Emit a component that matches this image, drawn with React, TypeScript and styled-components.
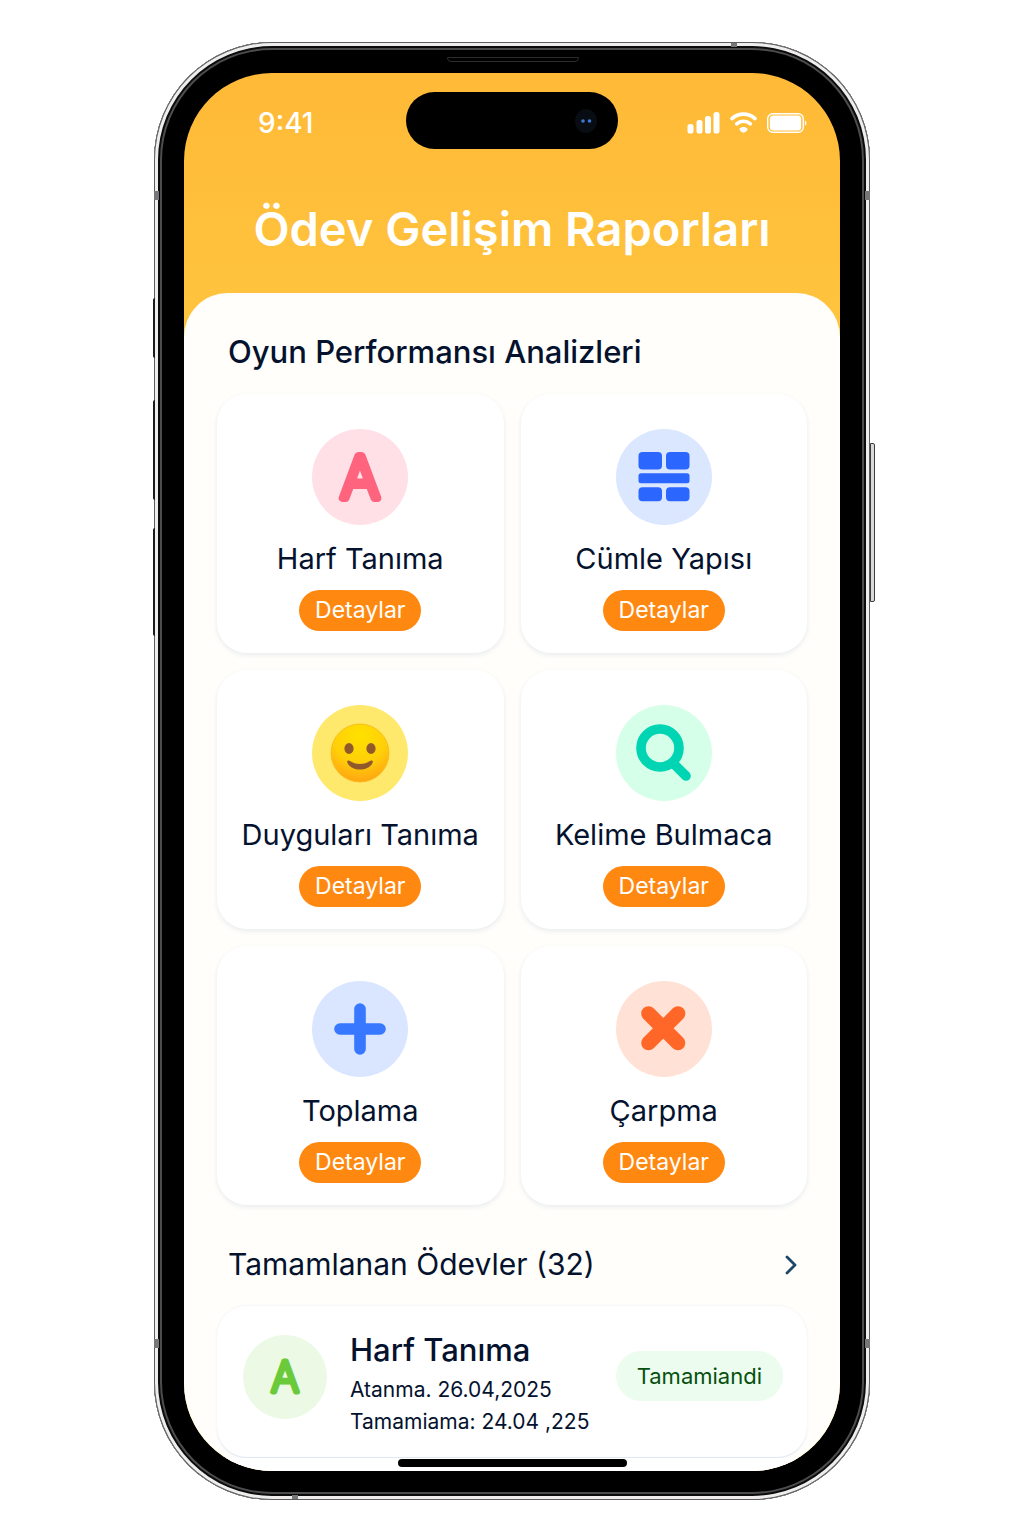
import React from "react";
import styled, { createGlobalStyle, css } from "styled-components";

const ink = "#04122e";

const GlobalStyle = createGlobalStyle`
  *, *::before, *::after { box-sizing: border-box; }
  body {
    margin: 0;
    background: #ffffff;
    color: ${ink};
    font-family: Inter, "Noto Sans", sans-serif;
    -webkit-font-smoothing: antialiased;
  }
  h1, h2, h3, p { margin: 0; }
`;

const Page = styled.div`
  display: flex;
  justify-content: center;
  padding: 42px 16px 36px;
`;

/* ---------- phone body ---------- */

const Device = styled.div`
  position: relative;
  width: 100%;
  max-width: 716px;
  padding: 31px 30px 29px;
  border-radius: 118px;
  background: #000000;
  box-shadow:
    inset 0 0 0 1px #5d5d5f,
    inset 0 0 0 4px #efeeec,
    inset 0 0 0 6px #0b0b0c,
    inset 0 0 0 8px #4d4d50;
`;

const Antenna = styled.span<{ $edge: "left" | "right" | "top" | "bottom"; $at: number }>`
  position: absolute;
  background: #77777a;
  ${(p) =>
    p.$edge === "left" || p.$edge === "right"
      ? css`
          ${p.$edge}: 0;
          top: ${p.$at}px;
          width: 5px;
          height: 9px;
        `
      : css`
          ${p.$edge}: 1px;
          left: ${p.$at}px;
          width: 6px;
          height: 4px;
        `}
`;

const SideKey = styled.span<{ $side: "left" | "right"; $top: number; $length: number }>`
  position: absolute;
  top: ${(p) => p.$top}px;
  height: ${(p) => p.$length}px;
  ${(p) =>
    p.$side === "left"
      ? css`
          left: -1px;
          width: 2px;
          border-radius: 2px 0 0 2px;
          background: #1b1b1d;
        `
      : css`
          right: -5px;
          width: 5px;
          border: 1px solid #3c3c3e;
          border-radius: 0 2px 2px 0;
          background: #d9d9da;
        `}
`;

const Speaker = styled.span`
  position: absolute;
  top: 15px;
  left: 50%;
  width: 132px;
  height: 5px;
  margin-left: -65px;
  border: 1px solid #2c2c2e;
  border-radius: 0 0 4px 4px;
`;

const Screen = styled.div`
  overflow: hidden;
  border-radius: 88px;
  background: linear-gradient(180deg, #ffba37 0, #ffc43e 260px);
`;

/* ---------- header ---------- */

const Header = styled.header`
  color: #ffffff;
  padding: 19px 33px 34px;
`;

const StatusBar = styled.div`
  display: grid;
  grid-template-columns: 1fr auto 1fr;
  align-items: center;
`;

const Clock = styled.time`
  padding: 4px 0 0 41px;
  font-size: 28px;
  line-height: 34px;
  font-weight: 500;
`;

const Island = styled.div`
  display: flex;
  align-items: center;
  justify-content: flex-end;
  width: 212px;
  height: 57px;
  padding-right: 20px;
  border-radius: 29px;
  background: #000000;
`;

const Indicators = styled.div`
  display: flex;
  justify-content: flex-end;
  align-items: center;
  gap: 10px;
  padding-top: 4px;
`;

const Title = styled.h1`
  margin-top: 50px;
  text-align: center;
  font-size: 47px;
  line-height: 60px;
  font-weight: 600;
  white-space: nowrap;
`;

/* ---------- content ---------- */

const Sheet = styled.main`
  border-radius: 44px 44px 0 0;
  background: #fffefb;
`;

const Section = styled.section`
  padding: 39px 33px 0;
`;

const SectionHead = styled.div`
  display: flex;
  align-items: center;
  justify-content: space-between;
  padding: 0 5px 0 11px;
  margin-bottom: 22px;
`;

const SectionTitle = styled.h2<{ $size: number; $weight: number }>`
  font-size: ${(p) => p.$size}px;
  line-height: 40px;
  font-weight: ${(p) => p.$weight};
`;

const MoreButton = styled.button`
  display: flex;
  padding: 6px 4px 4px;
  border: 0;
  background: none;
  cursor: pointer;
`;

const GameGrid = styled.div`
  display: grid;
  grid-template-columns: repeat(2, minmax(0, 1fr));
  gap: 17px;
`;

const cardSurface = css`
  border-radius: 30px;
  background: #ffffff;
  box-shadow: 0 2px 5px rgba(28, 66, 110, 0.1);
`;

const GameCard = styled.article`
  ${cardSurface}
  display: flex;
  flex-direction: column;
  align-items: center;
  padding: 35px 8px 22px;
`;

const IconDisc = styled.div<{ $tint: string; $size: number }>`
  display: flex;
  flex: none;
  align-items: center;
  justify-content: center;
  width: ${(p) => p.$size}px;
  height: ${(p) => p.$size}px;
  border-radius: 50%;
  background: ${(p) => p.$tint};
`;

const GameName = styled.h3`
  margin: 15px 0 12px;
  font-size: 29px;
  line-height: 38px;
  font-weight: 400;
  white-space: nowrap;
`;

const DetailsButton = styled.button`
  height: 41px;
  padding: 0 16px;
  border: 0;
  border-radius: 21px;
  background: #ff8811;
  color: #ffffff;
  font: 400 23px/41px Inter, "Noto Sans", sans-serif;
  cursor: pointer;
`;

const TaskCard = styled.article`
  ${cardSurface}
  display: flex;
  align-items: flex-start;
  padding: 29px 24px 20px 26px;
  box-shadow: 0 0 3px rgba(28, 66, 110, 0.08), inset 0 -1px 0 #dfe8f4;
`;

const TaskText = styled.div`
  flex: 1;
  min-width: 0;
  margin-left: 23px;
`;

const TaskName = styled.h3`
  margin-bottom: 9px;
  font-size: 31px;
  line-height: 30px;
  font-weight: 500;
`;

const TaskDate = styled.p`
  font-size: 21px;
  line-height: 32px;
  white-space: nowrap;
`;

const StatusPill = styled.span`
  flex: none;
  margin-top: 16px;
  padding: 0 21px;
  border-radius: 25px;
  background: #ecfcef;
  color: #06500f;
  font-size: 22px;
  line-height: 50px;
`;

const HomeArea = styled.div`
  display: flex;
  justify-content: center;
  padding: 1px 0 4px;
  background: #ffffff;
`;

const HomeBar = styled.span`
  width: 229px;
  height: 8px;
  border-radius: 4px;
  background: #000000;
`;

/* ---------- drawings ---------- */

const Camera = () => (
  <svg width="24" height="26" viewBox="0 0 24 26" aria-hidden="true">
    <ellipse cx="12" cy="13" rx="11" ry="12" fill="#080d13" />
    <circle cx="9" cy="13" r="1.800" fill="#3f76d8" />
    <circle cx="15.500" cy="13" r="1.800" fill="#3f76d8" />
  </svg>
);

const Signal = () => (
  <svg width="33" height="22" viewBox="0 0 33 22" fill="#fff" aria-hidden="true">
    <rect x="0.500" y="12" width="6" height="9.500" rx="2.600" />
    <rect x="9.500" y="8" width="6" height="13.500" rx="2.600" />
    <rect x="18" y="4" width="6" height="17.500" rx="2.600" />
    <rect x="26.500" y="0" width="6" height="21.500" rx="2.600" />
  </svg>
);

const Wifi = () => (
  <svg width="27" height="21" viewBox="0 0 27 21" fill="none" aria-hidden="true">
    <path d="M2 6.600C8.400 .6 18.600 .6 25 6.600" stroke="#fff" strokeWidth="3.600" strokeLinecap="round" />
    <path d="M6.700 11.800C10.600 8.300 16.400 8.300 20.300 11.800" stroke="#fff" strokeWidth="3.600" strokeLinecap="round" />
    <path d="M9.400 16.800C11.600 14.300 15.400 14.300 17.600 16.800C17.600 18.600 15 20.700 13.500 20.700S9.400 18.600 9.400 16.800Z" fill="#fff" />
  </svg>
);

const Battery = () => (
  <svg width="40" height="20" viewBox="0 0 40 20" aria-hidden="true">
    <rect x="0.700" y="0.700" width="35.600" height="18.600" rx="5" fill="none" stroke="#fff" strokeWidth="1.400" />
    <rect x="2.800" y="2.600" width="31.400" height="14.800" rx="3.500" fill="#fff" />
    <path d="M37.800 7.400C40 8.200 40 11.800 37.800 12.600Z" fill="#fff" />
  </svg>
);

const LetterA = ({ color, size, weight, edge }: { color: string; size: number; weight: number; edge: number }) => (
  <svg width="80" height="80" viewBox="0 0 80 80" aria-hidden="true">
    <text
      x="40"
      y={40 + size * 0.364}
      textAnchor="middle"
      fontFamily="Inter, sans-serif"
      fontSize={size}
      fontWeight={weight}
      fill={color}
      stroke={color}
      strokeWidth={edge}
      strokeLinejoin="round"
    >
      A
    </text>
  </svg>
);

const Blocks = () => (
  <svg width="52" height="50" viewBox="0 0 52 50" fill="#2b66ff" aria-hidden="true">
    <rect x="0.500" y="0" width="23.500" height="17.500" rx="4" />
    <rect x="28" y="0" width="23.500" height="17.500" rx="4" />
    <rect x="0.500" y="21.300" width="51" height="10" rx="2.500" />
    <rect x="0.500" y="35.300" width="23.500" height="14" rx="4" />
    <rect x="28" y="35.300" width="23.500" height="14" rx="4" />
  </svg>
);

const Smile = () => (
  <svg width="60" height="60" viewBox="0 0 60 60" aria-hidden="true">
    <defs>
      <radialGradient id="face" cx="0.500" cy="0.200" r="0.850">
        <stop offset="0" stopColor="#ffe100" />
        <stop offset="0.550" stopColor="#ffcf08" />
        <stop offset="1" stopColor="#ff9f14" />
      </radialGradient>
    </defs>
    <circle cx="30" cy="30" r="29" fill="url(#face)" stroke="#f8b716" strokeWidth="0.800" />
    <ellipse cx="19" cy="25.500" rx="4.600" ry="5.400" fill="#90592c" />
    <ellipse cx="41" cy="25.500" rx="4.600" ry="5.400" fill="#90592c" />
    <path d="M17.200 38.200C17.600 36.800 19.500 37.600 21 38.600C25 41.800 35 41.800 39 38.600C40.500 37.600 42.400 36.800 42.800 38.200C43.200 42 37 46.600 30 46.600S16.800 42 17.200 38.200Z" fill="#90592c" />
  </svg>
);

const Magnifier = () => (
  <svg width="58" height="60" viewBox="0 0 58 60" fill="none" stroke="#00d5b3" aria-hidden="true">
    <path d="M38 40L51 53" strokeWidth="9.600" strokeLinecap="round" />
    <circle cx="25" cy="25" r="19" strokeWidth="9.600" />
  </svg>
);

const Plus = () => (
  <svg width="52" height="52" viewBox="0 0 52 52" fill="none" aria-hidden="true">
    <path d="M26 6V46M6 26H46" stroke="#3877ff" strokeWidth="11.600" strokeLinecap="round" />
  </svg>
);

const Times = () => (
  <svg width="46" height="46" viewBox="0 0 46 46" fill="none" aria-hidden="true">
    <path d="M7.500 7.500L37 37M37 7.500L7.500 37" stroke="#ff6729" strokeWidth="14.600" strokeLinecap="round" />
  </svg>
);

const Chevron = () => (
  <svg width="14" height="22" viewBox="0 0 14 22" fill="none" aria-hidden="true">
    <path d="M3 3L11 11L3 19" stroke="#1d4768" strokeWidth="2.800" strokeLinecap="round" strokeLinejoin="round" />
  </svg>
);

/* ---------- data ---------- */

const games = [
  { name: "Harf Tanıma", tint: "#ffe0e6", icon: <LetterA color="#ff647f" size={58} weight={200} edge={8} /> },
  { name: "Cümle Yapısı", tint: "#dbe6ff", icon: <Blocks /> },
  { name: "Duyguları Tanıma", tint: "#ffe96c", icon: <Smile /> },
  { name: "Kelime Bulmaca", tint: "#d5ffe8", icon: <Magnifier /> },
  { name: "Toplama", tint: "#dae6ff", icon: <Plus /> },
  { name: "Çarpma", tint: "#ffe2d5", icon: <Times /> },
];

export default function App() {
  return (
    <>
      <GlobalStyle />
      <Page>
        <Device>
          <SideKey $side="left" $top={256} $length={60} />
          <SideKey $side="left" $top={358} $length={100} />
          <SideKey $side="left" $top={486} $length={108} />
          <SideKey $side="right" $top={401} $length={159} />
          <Antenna $edge="left" $at={149} />
          <Antenna $edge="right" $at={149} />
          <Antenna $edge="left" $at={1297} />
          <Antenna $edge="right" $at={1297} />
          <Antenna $edge="top" $at={577} />
          <Antenna $edge="bottom" $at={138} />
          <Speaker />
          <Screen>
            <Header>
              <StatusBar>
                <Clock>9:41</Clock>
                <Island>
                  <Camera />
                </Island>
                <Indicators>
                  <Signal />
                  <Wifi />
                  <Battery />
                </Indicators>
              </StatusBar>
              <Title>Ödev Gelişim Raporları</Title>
            </Header>
            <Sheet>
              <Section>
                <SectionHead>
                  <SectionTitle $size={31} $weight={500}>
                    Oyun Performansı Analizleri
                  </SectionTitle>
                </SectionHead>
                <GameGrid>
                  {games.map((game) => (
                    <GameCard key={game.name}>
                      <IconDisc $tint={game.tint} $size={96}>
                        {game.icon}
                      </IconDisc>
                      <GameName>{game.name}</GameName>
                      <DetailsButton type="button">Detaylar</DetailsButton>
                    </GameCard>
                  ))}
                </GameGrid>
              </Section>
              <Section>
                <SectionHead>
                  <SectionTitle $size={30} $weight={400}>
                    Tamamlanan Ödevler (32)
                  </SectionTitle>
                  <MoreButton type="button" aria-label="Tamamlanan Ödevler">
                    <Chevron />
                  </MoreButton>
                </SectionHead>
                <TaskCard>
                  <IconDisc $tint="#ebf9e5" $size={84}>
                    <LetterA color="#6bca3a" size={42} weight={200} edge={5} />
                  </IconDisc>
                  <TaskText>
                    <TaskName>Harf Tanıma</TaskName>
                    <TaskDate>Atanma. 26.04,2025</TaskDate>
                    <TaskDate>Tamamiama: 24.04 ,225</TaskDate>
                  </TaskText>
                  <StatusPill>Tamamiandi</StatusPill>
                </TaskCard>
              </Section>
              <HomeArea>
                <HomeBar />
              </HomeArea>
            </Sheet>
          </Screen>
        </Device>
      </Page>
    </>
  );
}
